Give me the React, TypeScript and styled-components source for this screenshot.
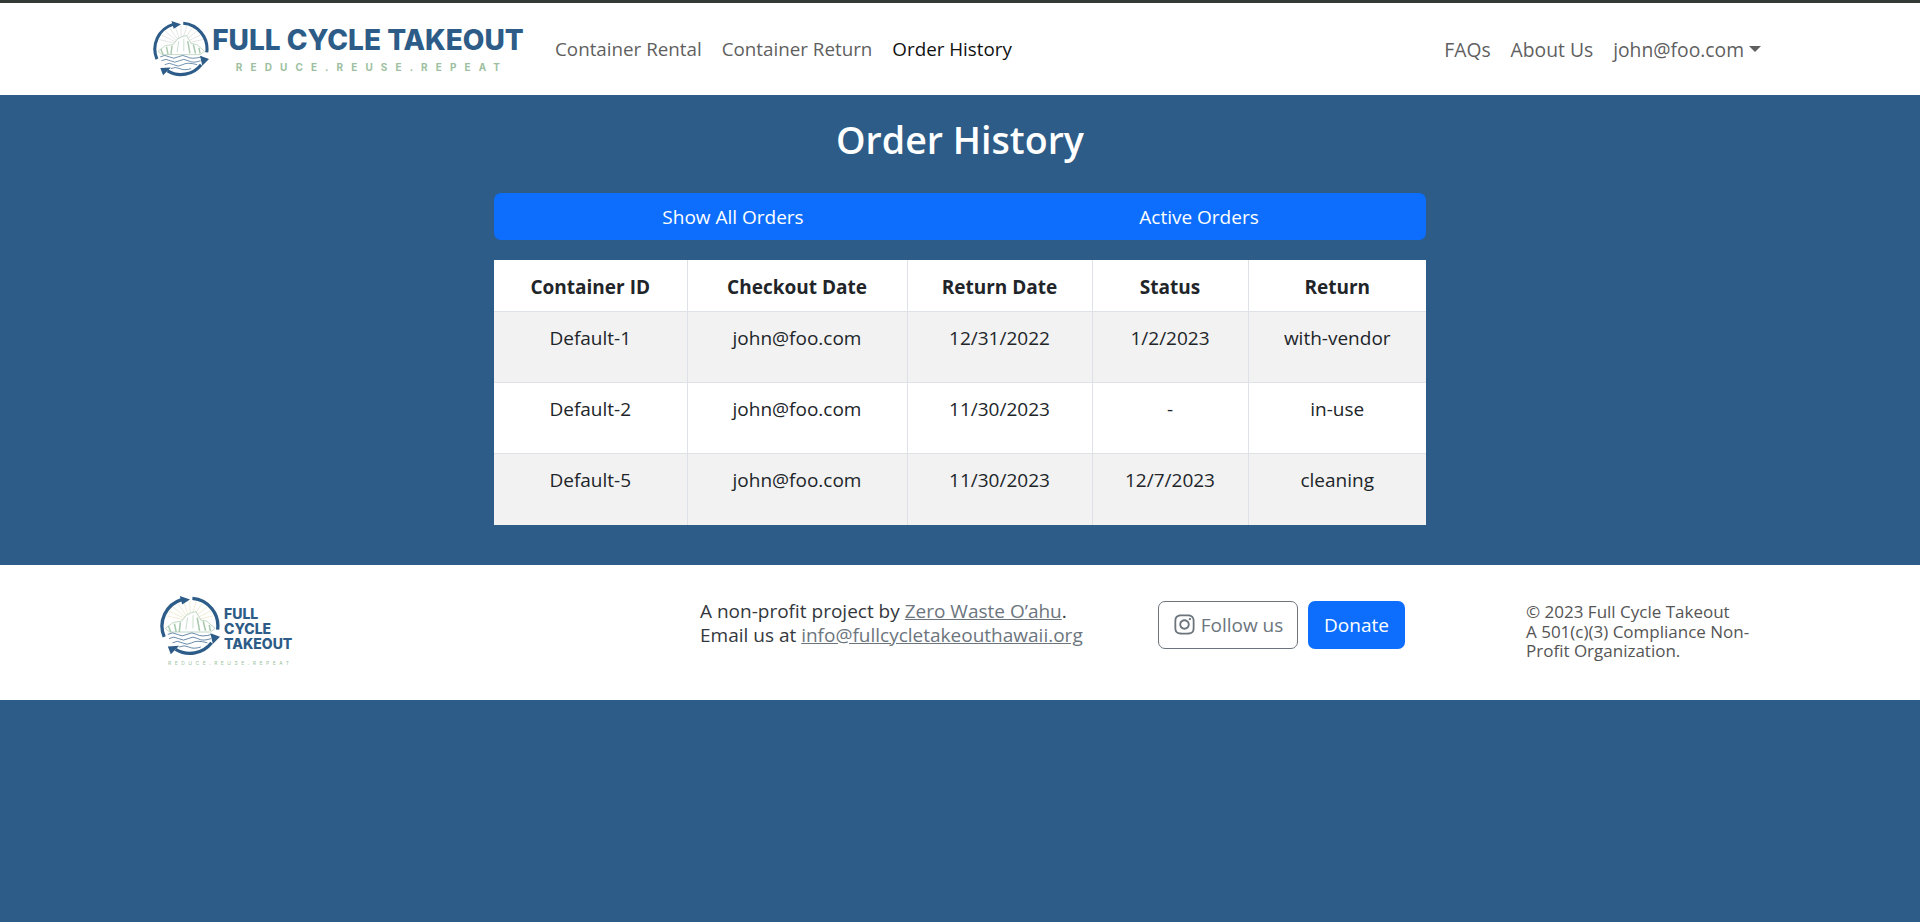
import React from 'react'
import styled, { createGlobalStyle } from 'styled-components'
import { FaInstagram } from 'react-icons/fa'

const FONT = `"Open Sans", "Noto Sans", "Liberation Sans", sans-serif`

const orders = [
    { id: 'Default-1', email: 'john@foo.com', out: '12/31/2022', back: '1/2/2023', state: 'with-vendor' },
    { id: 'Default-2', email: 'john@foo.com', out: '11/30/2023', back: '-', state: 'in-use' },
    { id: 'Default-5', email: 'john@foo.com', out: '11/30/2023', back: '12/7/2023', state: 'cleaning' },
]

const columnWidths = [193, 220, 185, 156, 178]

const Emblem: React.FC<{ size: number; glow: string }> = ({ size, glow }) => (
    <svg width={size} height={size} viewBox="0 0 100 100" aria-hidden="true">
        <g stroke={glow} strokeWidth="1">
            {[-75, -60, -45, -30, -15, 0, 15, 30, 45, 60, 75].map((a) => (
                <line key={a} x1="50" y1="42" x2={50 + 40 * Math.sin((a * Math.PI) / 180)} y2={42 - 34 * Math.cos((a * Math.PI) / 180)} />
            ))}
        </g>
        <path d="M9 54 L22 44 L36 42 L44 32 L52 28 L60 26 L68 40 L78 42 L92 54 L84 60 L16 60 Z" fill="#fff" stroke="#a9c9af" strokeWidth="1.2" />
        <path d="M14 50 L18 60 M24 46 L27 60 M34 44 L32 60 M62 36 L66 58 M72 42 L76 58 M82 48 L84 58" stroke="#a9c9af" strokeWidth="2.6" />
        <path d="M46 36 L43 56 M55 32 L55 54" stroke="#c6dccb" strokeWidth="1.6" />
        <g fill="none" stroke="#2c5c87" strokeWidth="1.2">
            <path d="M13 64 Q21 59 29 64 T45 64 T61 64 T87 64" />
            <path d="M15 71 Q23 66 31 71 T47 71 T63 71 T85 71" />
            <path d="M21 78 Q29 73 37 78 T53 78 T79 78" />
            <path d="M32 85 Q40 81 48 85 T68 85" />
        </g>
        <g fill="none" stroke="#2c5c87" strokeWidth="5.5">
            <path d="M36 6 A46 46 0 0 0 7 68" />
            <path d="M54 4 A46 46 0 0 1 96 56" />
            <path d="M86 78 A46 46 0 0 1 26 89" />
        </g>
        <path d="M33 0 L50 6 L37 14 Z M84 62 L100 68 L88 80 Z M13 84 L32 83 L18 97 Z" fill="#2c5c87" />
    </svg>
)

const App: React.FC = () => {
    return (
        <>
            <GlobalStyle />
            <NavBar>
                <Brand>
                    <Emblem size={56} glow="#cfd3cf" />
                    <BrandText>
                        <BrandName>FULL CYCLE TAKEOUT</BrandName>
                        <BrandTag>REDUCE.REUSE.REPEAT</BrandTag>
                    </BrandText>
                </Brand>
                <NavLink>Container Rental</NavLink>
                <NavLink>Container Return</NavLink>
                <NavLink $active>Order History</NavLink>
                <NavRight>
                    <NavLink>FAQs</NavLink>
                    <NavLink>About Us</NavLink>
                    <NavLink>john@foo.com<Caret /></NavLink>
                </NavRight>
            </NavBar>
            <Main>
                <Title>Order History</Title>
                <Tabs>
                    <Tab>Show All Orders</Tab>
                    <Tab>Active Orders</Tab>
                </Tabs>
                <Table>
                    <colgroup>
                        {columnWidths.map((w) => <col key={w} width={w} />)}
                    </colgroup>
                    <thead>
                        <tr>
                            <Th>Container ID</Th>
                            <Th>Checkout Date</Th>
                            <Th>Return Date</Th>
                            <Th>Status</Th>
                            <Th>Return</Th>
                        </tr>
                    </thead>
                    <tbody>
                        {orders.map((o) => (
                            <Row key={o.id}>
                                <Td>{o.id}</Td>
                                <Td>{o.email}</Td>
                                <Td>{o.out}</Td>
                                <Td>{o.back}</Td>
                                <Td>{o.state}</Td>
                            </Row>
                        ))}
                    </tbody>
                </Table>
            </Main>
            <Footer>
                <FooterBrand>
                    <FooterLogoRow>
                        <Emblem size={60} glow="#eadfb8" />
                        <FooterName>FULL<br />CYCLE<br />TAKEOUT</FooterName>
                    </FooterLogoRow>
                    <FooterTag>REDUCE.REUSE.REPEAT</FooterTag>
                </FooterBrand>
                <Contact>
                    A non-profit project by <FooterLink>Zero Waste O’ahu</FooterLink>.<br />
                    Email us at <FooterLink>info@fullcycletakeouthawaii.org</FooterLink>
                </Contact>
                <FollowButton><FaInstagram size={23} />Follow us</FollowButton>
                <DonateButton>Donate</DonateButton>
                <Legal>
                    © 2023 Full Cycle Takeout<br />
                    A 501(c)(3) Compliance Non-<br />
                    Profit Organization.
                </Legal>
            </Footer>
        </>
    )
}

export default App

const GlobalStyle = createGlobalStyle`
    html, body {
        margin: 0;
        background: #2c5c87;
        font-family: ${FONT};
        color: #212529;
    }
`

const NavBar = styled.nav`
    display: flex;
    align-items: center;
    height: 92px;
    padding: 0 159px 0 153px;
    background: #fff;
    border-top: 3px solid #343a36;
`

const Brand = styled.div`
    display: flex;
    align-items: center;
    gap: 4px;
    margin-right: 32px;
`

const BrandText = styled.div`
    display: flex;
    flex-direction: column;
    align-items: center;
    width: 310px;
`

const BrandName = styled.div`
    font-family: Inter, sans-serif;
    font-size: 28px;
    line-height: 32px;
    font-weight: 800;
    color: #2c5c87;
    white-space: nowrap;
`

const BrandTag = styled.div`
    margin-top: 5px;
    margin-bottom: 1px;
    padding-left: 8px;
    font-family: Inter, sans-serif;
    font-size: 10px;
    line-height: 12px;
    font-weight: 700;
    letter-spacing: 8.1px;
    color: #9dbf9f;
    white-space: nowrap;
`

const NavLink = styled.a<{ $active?: boolean }>`
    display: flex;
    align-items: center;
    margin-right: 20px;
    font-size: 18.8px;
    color: ${(p) => (p.$active ? '#111' : '#5f5f5f')};
    white-space: nowrap;
    &:last-child {
        margin-right: 0;
    }
`

const NavRight = styled.div`
    display: flex;
    margin-left: auto;
    ${NavLink} {
        font-size: 19.3px;
    }
`

const Caret = styled.span`
    margin-left: 5px;
    border-top: 6px solid #5f5f5f;
    border-left: 6px solid transparent;
    border-right: 6px solid transparent;
`

const Main = styled.main`
    display: flex;
    flex-direction: column;
    align-items: center;
    height: 470px;
    padding-top: 16px;
    box-sizing: border-box;
`

const Title = styled.h1`
    margin: 0 0 24px;
    font-size: 37.6px;
    line-height: 58px;
    font-weight: 600;
    color: #fff;
`

const Tabs = styled.div`
    display: grid;
    grid-template-columns: 1fr 1fr;
    width: 932px;
    height: 47px;
    margin-bottom: 20px;
    background: #0d6efd;
    border-radius: 7px;
`

const Tab = styled.button`
    border: 0;
    background: none;
    padding: 0 0 0 12px;
    font-family: inherit;
    font-size: 19px;
    color: #fff;
`

const Table = styled.table`
    width: 932px;
    table-layout: fixed;
    border-collapse: collapse;
    background: #fff;
    text-align: center;
    font-size: 19px;
`

const Th = styled.th`
    height: 51px;
    padding: 3px 8px 0;
    box-sizing: border-box;
    font-weight: 700;
    color: #212529;
    border: 1px solid #dee2e6;
    border-top: 0;
    &:first-child { border-left: 0; }
    &:last-child { border-right: 0; }
`

const Row = styled.tr`
    &:nth-child(odd) {
        background: #f2f2f2;
    }
    &:last-child > td {
        height: 72px;
    }
`

const Td = styled.td`
    height: 71px;
    padding: 13px 8px 0;
    box-sizing: border-box;
    vertical-align: top;
    line-height: 27px;
    border: 1px solid #dee2e6;
    &:first-child { border-left: 0; }
    &:last-child { border-right: 0; }
    tr:last-child > & { border-bottom: 0; }
`

const Footer = styled.footer`
    display: flex;
    align-items: center;
    height: 135px;
    padding-left: 160px;
    background: #fff;
`

const FooterBrand = styled.div`
    display: flex;
    flex-direction: column;
    width: 540px;
    margin-bottom: 3px;
`

const FooterLogoRow = styled.div`
    display: flex;
    align-items: center;
    gap: 4px;
`

const FooterName = styled.div`
    margin-top: 4px;
    font-family: Inter, sans-serif;
    font-size: 14px;
    line-height: 15px;
    font-weight: 800;
    color: #2c5c87;
`

const FooterTag = styled.div`
    margin: 4px 0 0 8px;
    font-family: Inter, sans-serif;
    font-size: 5px;
    letter-spacing: 3.5px;
    color: #9dbf9f;
`

const Contact = styled.div`
    width: 458px;
    margin-bottom: 20px;
    font-size: 19px;
    line-height: 24px;
    color: #33383d;
    white-space: nowrap;
`

const FooterLink = styled.a`
    color: #6c757d;
    text-decoration: underline;
`

const FollowButton = styled.button`
    display: flex;
    align-items: center;
    justify-content: center;
    gap: 5px;
    width: 140px;
    height: 48px;
    margin-right: 10px;
    margin-bottom: 16px;
    padding: 0;
    box-sizing: border-box;
    background: #fff;
    border: 1px solid #6c757d;
    border-radius: 7px;
    font-family: inherit;
    font-size: 19px;
    color: #6c757d;
`

const DonateButton = styled.button`
    width: 97px;
    height: 48px;
    margin-right: 121px;
    margin-bottom: 16px;
    padding: 0;
    background: #0d6efd;
    border: 0;
    border-radius: 7px;
    font-family: inherit;
    font-size: 19px;
    color: #fff;
`

const Legal = styled.div`
    margin-bottom: 2px;
    font-size: 17px;
    line-height: 19.5px;
    color: #555;
    white-space: nowrap;
`
